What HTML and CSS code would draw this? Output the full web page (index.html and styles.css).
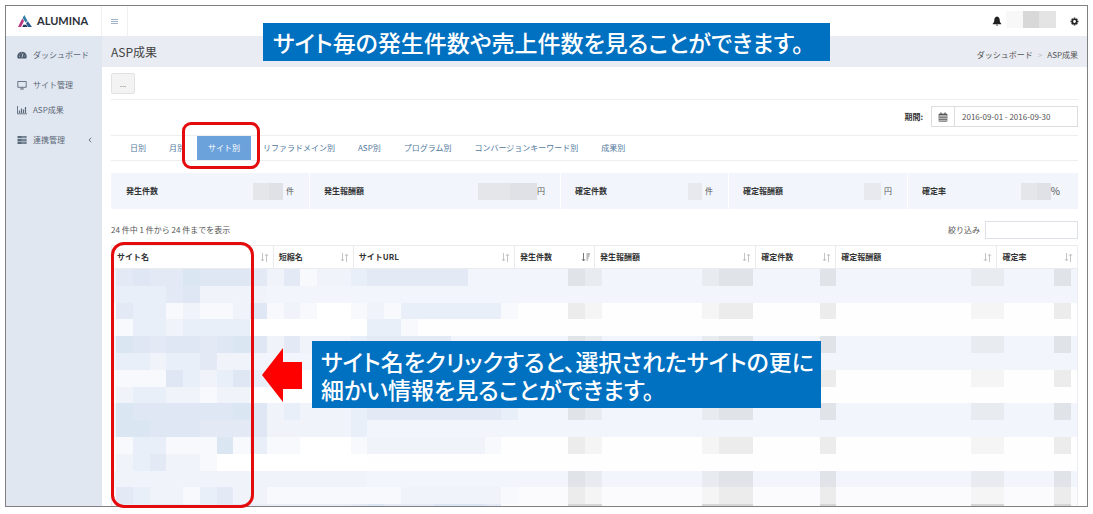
FILE: index.html
```html
<!DOCTYPE html>
<html lang="ja">
<head>
<meta charset="utf-8">
<title>ASP成果 - ALUMINA</title>
<link rel="stylesheet" href="styles.css">
</head>
<body>
<div class="frame">
  <header class="topbar">
    <a class="brand" href="#">
      <svg class="brand-mark" viewBox="0 0 14 12" aria-hidden="true">
        <path d="M0 12 4.300 3.500 6 6 3 12z" fill="#b8357f"/>
        <path d="M4.600 3 6.300 0 9.500 5.800 7.600 7.600z" fill="#2f7fa8"/>
        <path d="M8 8.200 9.900 6.300 14 12H10z" fill="#2c5e94"/>
        <path d="M4.300 12 5.400 9.800H8.300L9.400 12z" fill="#27355c"/>
      </svg>
      <span>ALUMINA</span>
    </a>
    <button class="toggle" type="button" aria-label="メニュー"><i></i><i></i><i></i></button>
    <div class="user">
      <svg class="bell" viewBox="0 0 10 10" aria-hidden="true"><path d="M5 .5C3 .8 2.400 2.300 2.300 4 2.200 6 1.600 6.700.800 7.600V8.200H9.200V7.600C8.400 6.700 7.800 6 7.700 4 7.600 2.300 7 .8 5 .5zM4 8.700H6Q5.800 9.800 5 9.800T4 8.700z"/></svg>
      <span class="name"><i></i><i></i><i></i></span>
      <svg class="gear" viewBox="0 0 10 10" aria-hidden="true"><circle cx="5" cy="5" r="2.500" fill="none" stroke="#222" stroke-width="1.900"/><path d="M5 .6V2M5 8V9.400M.6 5H2M8 5H9.400M1.900 1.900 2.900 2.900M7.100 7.100 8.100 8.100M1.900 8.100 2.900 7.100M7.100 2.900 8.100 1.900" stroke="#222" stroke-width="1.700"/></svg>
    </div>
  </header>
  <div class="body">
    <nav class="sidebar">
      <a href="#"><svg viewBox="0 0 10 10"><path d="M.8 8.500A4.700 4.700 0 1 1 9.200 8.500z" fill="#4a5a6c"/><path d="M5 7.500 6 3.500M2 6.200H3M2.700 3.800 3.300 4.300M7.500 6H8.300M4.500 2.500V3.200" stroke="#e1e7f0" stroke-width=".8"/></svg>ダッシュボード</a>
      <a class="second" href="#"><svg viewBox="0 0 10 10"><path d="M.8 1.500H9.200V7.300H.8zM3 9H7M5 7.300V9" fill="none" stroke="#5b6b7c" stroke-width=".9"/></svg>サイト管理</a>
      <a href="#"><svg viewBox="0 0 10 10"><path d="M.5 1V8.800H10" fill="none" stroke="#5b6b7c" stroke-width=".9"/><path d="M2.500 5.500V8M4.500 3.500V8M6.500 4.500V8M8.500 2V8" stroke="#5b6b7c" stroke-width="1.200"/></svg>ASP成果</a>
      <a class="last" href="#"><svg viewBox="0 0 10 10"><path d="M.5 1H9.500V3.300H.5zM.5 3.900H9.500V6.200H.5zM.5 6.800H9.500V9.100H.5z" fill="#5b6b7c"/><path d="M4.500 2.100H8.500M4.500 5H8.500M4.500 7.900H8.500" stroke="#b9c3cf" stroke-width=".7"/></svg>連携管理
        <svg class="chev" viewBox="0 0 4 6"><path d="M3.200.7 1 3 3.200 5.300" fill="none" stroke="#5b6b7c" stroke-width=".9"/></svg></a>
    </nav>
    <main class="main">
      <div class="heading">
        <h1>ASP成果</h1>
        <div class="crumbs"><a href="#">ダッシュボード</a><span class="sep">&gt;</span><span>ASP成果</span></div>
      </div>
      <div class="content">
        <div class="actions"><button class="more" type="button">...</button></div>
        <div class="period">
          <label for="range">期間:</label>
          <div class="range">
            <span class="cal"><svg viewBox="0 0 10 10"><path d="M1 2H9V9.300H1zM1 3.900H9M1 5.700H9M1 7.500H9M3 4V9.300M5 4V9.300M7 4V9.300" fill="none" stroke="#555" stroke-width=".7"/><path d="M1 2.500H9M3 .5V2.500M7 .5V2.500" stroke="#555" stroke-width="1.200"/></svg></span>
            <input id="range" type="text" value="2016-09-01 - 2016-09-30">
          </div>
        </div>
        <nav class="tabs">
          <a href="#">日別</a><a href="#">月別</a><a class="on" href="#">サイト別</a><a href="#">リファラドメイン別</a><a href="#">ASP別</a><a href="#">プログラム別</a><a href="#">コンバージョンキーワード別</a><a href="#">成果別</a>
        </nav>
        <div class="stats">
          <div class="stat"><b>発生件数</b><span><i class="mask m30"></i>件</span></div>
          <div class="stat"><b>発生報酬額</b><span class="tight"><i class="mask m59"></i>円</span></div>
          <div class="stat"><b>確定件数</b><span><i class="mask m14"></i>件</span></div>
          <div class="stat"><b>確定報酬額</b><span><i class="mask m17"></i>円</span></div>
          <div class="stat"><b>確定率</b><span class="tight pct"><i class="mask m30"></i>%</span></div>
        </div>
        <div class="tools">
          <span>24 件中 1 件から 24 件までを表示</span>
          <label for="filter">絞り込み</label><input id="filter" type="search">
        </div>
        <div class="grid">
          <table>
            <colgroup><col class="wide"><col><col class="wide"><col><col class="wide"><col><col class="wide"><col></colgroup>
            <thead><tr>
              <th>サイト名<span class="sort"></span></th><th>短縮名<span class="sort"></span></th><th>サイトURL<span class="sort"></span></th><th>発生件数<span class="sort active"></span></th><th>発生報酬額<span class="sort"></span></th><th>確定件数<span class="sort"></span></th><th>確定報酬額<span class="sort"></span></th><th>確定率<span class="sort"></span></th>
            </tr></thead>
          </table>
          <svg class="mosaic" viewBox="0 0 967 238" preserveAspectRatio="none" aria-hidden="true"></svg>
        </div>
      </div>
    </main>
  </div>
</div>
<div class="ring ring-tab"></div>
<div class="ring ring-column"></div>
<div class="note note-top">サイト毎の発生件数や売上件数を見ることができます。</div>
<svg class="arrow" viewBox="0 0 40 54" aria-hidden="true"><path d="M0 27 21 0V14H40V41H21V54z" fill="#fe0000"/></svg>
<div class="note note-mid">サイト名をクリックすると、選択されたサイトの更に<br>細かい情報を見ることができます。</div>
<script src="script.js"></script>
</body>
</html>
```
FILE: styles.css
```css
* { box-sizing: border-box; }
body {
  position: relative;
  margin: 0;
  padding: 5px 5px 7px;
  min-height: 100vh;
  background: #fff;
  color: #555;
  font: 8px/12px "Noto Sans CJK JP", "Noto Sans", sans-serif;
}
a { color: inherit; text-decoration: none; }
button, input { font: inherit; color: inherit; border-radius: 0; }
.frame {
  display: flex;
  flex-direction: column;
  height: calc(100vh - 12px);
  border: 1px solid #808080;
  overflow: hidden;
}

.topbar { display: flex; flex: 0 0 30px; background: #fff; }
.brand {
  display: flex;
  align-items: center;
  gap: 5px;
  flex: 0 0 96px;
  padding-left: 12px;
  border-right: 1px solid #eef0f3;
  color: #2b2f38;
  font: 700 11px/14px Lato, sans-serif;
}
.brand-mark { width: 14px; height: 12px; }
.toggle {
  display: flex;
  flex-direction: column;
  align-items: center;
  justify-content: center;
  gap: 1px;
  width: 26px;
  padding: 0;
  border: 0;
  border-right: 1px solid #eef0f3;
  background: none;
}
.toggle i { width: 7px; height: 1px; background: #9fb1c6; }
.user { display: flex; align-items: center; margin-left: auto; padding-right: 8px; }
.bell { width: 10px; height: 10px; fill: #222; }
.name { display: flex; width: 50px; height: 17px; margin: 0 14px 4px 4px; }
.name i { flex: 1; background: #f8f8f8; }
.name i:nth-child(2) { background: #d8d8d9; }
.name i:nth-child(3) { background: #e4e4e5; }
.gear { width: 9px; height: 9px; }

.body { display: flex; flex: 1; min-height: 0; }
.sidebar { flex: 0 0 96px; padding-top: 6px; background: #e1e7f0; color: #5b6878; }
.sidebar a { display: flex; align-items: center; gap: 6px; height: 25px; padding: 0 10px 0 11px; white-space: nowrap; }
.sidebar a svg { flex: none; width: 10px; height: 10px; }
.sidebar .second { margin-top: 5px; }
.sidebar .last { margin-top: 5px; }
.sidebar a .chev { width: 4px; height: 6px; margin-left: auto; }

.main { flex: 1; min-width: 0; }
.heading {
  display: flex;
  align-items: center;
  justify-content: space-between;
  height: 31px;
  padding: 0 9px;
  background: #e9ecf2;
}
.heading h1 { margin: 0; color: #444; font-size: 12px; font-weight: 400; line-height: 18px; }
.crumbs { display: flex; gap: 5px; padding-top: 6px; }
.crumbs .sep { color: #bbb; }
.content { padding: 6px 9px 0; }
.actions { height: 27px; border-bottom: 1px solid #eee; }
.more { display: block; width: 24px; height: 21px; padding: 0; border: 1px solid #e2e2e2; border-radius: 2px; background: #f3f3f3; color: #888; }
.period { display: flex; align-items: center; justify-content: flex-end; gap: 8px; margin-top: 6px; }
.period label { color: #333; font-weight: 700; }
.range { display: flex; width: 147px; height: 21px; border: 1px solid #ddd; }
.cal { display: flex; align-items: center; justify-content: center; width: 23px; border-right: 1px solid #ddd; }
.cal svg { width: 10px; height: 10px; }
.range input { flex: 1; min-width: 0; padding: 0 7px; border: 0; background: #fff; font-size: 8px; }

.tabs {
  display: flex;
  gap: 1px;
  height: 26px;
  margin-top: 8px;
  padding-left: 8px;
  border-top: 1px solid #eee;
  border-bottom: 1px solid #eee;
  color: #50789d;
  line-height: 24px;
  white-space: nowrap;
}
.tabs a { padding: 0 11px; }
.tabs .on { background: #6ca2dc; color: #fff; }

.stats { display: grid; grid-template-columns: 198fr 251fr 168fr 179fr 171fr; height: 36px; margin-top: 12px; background: #f2f5fb; }
.stat { display: flex; align-items: center; justify-content: space-between; padding: 0 15px; }
.stat + .stat { padding-left: 14px; border-left: 1px solid #fff; }
.stat b { color: #333; }
.stat span { display: flex; align-items: center; gap: 3px; }
.stat .tight { gap: 0; }
.stat .pct { padding-right: 3px; font-size: 10px; }
.mask { height: 17px; background: linear-gradient(90deg, #e5e6ea 55%, #e0e1e6 55%); }
.m14 { width: 14px; background: #e8e9ee; }
.m17 { width: 17px; background: #e8e9ee; }
.m30 { width: 30px; }
.m59 { width: 59px; }

.tools { display: flex; align-items: center; height: 18px; margin-top: 12px; }
.tools label { margin-left: auto; }
.tools input { width: 93px; height: 18px; margin-left: 5px; border: 1px solid #dde1e6; background: #fff; }
.grid { position: relative; margin-top: 6px; border-left: 1px solid #eaedf2; border-right: 1px solid #eaedf2; }
table { width: 100%; table-layout: fixed; border-collapse: collapse; }
.wide { width: 16.700%; }
th {
  position: relative;
  height: 23px;
  padding: 0 5px;
  border: 1px solid #e9ebee;
  border-width: 1px 1px 1px 0;
  color: #333;
  text-align: left;
  white-space: nowrap;
}
th:last-child { border-right: 0; }
.sort { position: absolute; top: 7px; right: 4px; width: 9px; height: 9px; }
.sort svg { display: block; width: 9px; height: 9px; }
.mosaic { display: block; width: 100%; height: 238px; }

.ring { position: absolute; border: 3px solid #e30b0b; }
.ring-tab { left: 182px; top: 122px; width: 78px; height: 47px; border-radius: 9px; }
.ring-column { left: 111px; top: 242px; width: 143px; height: 266px; border-radius: 13px; }
.note {
  position: absolute;
  background: #0070c0;
  color: #fff;
  font-size: 23px;
  font-weight: 500;
  line-height: 28px;
  font-feature-settings: "palt";
  white-space: nowrap;
}
.note-top { left: 263px; top: 23px; width: 567px; padding: 5px 10px; }
.note-mid { left: 312px; top: 341px; width: 509px; padding: 6px 9px 5px; }
.arrow { position: absolute; left: 262px; top: 348px; width: 40px; height: 54px; }
```
FILE: script.js
```js
const colors = {
  a: '#dbe6f3', b: '#e0e7f4', c: '#e4eaf5', d: '#e9eff8', e: '#f0f3f9', f: '#f7f9fd', g: '#ffffff',
  h: '#e0e3e8', i: '#e8ebef', j: '#ececed', k: '#f5f5f5'
};
const left = [
  'cbccabbbcecfeedcccccc',
  'dddcbeeee',
  'cddfeffebfefggfefddddddf',
  'fddeddddgggggggddf',
  'abcbbcbabeceeedccccc',
  'ddeddcee',
  'fffbdedbdefggeedddddd',
  'eddeefee',
  'abbbbbbabedeeedccccccccd',
  'aabbbcccbeeeeed',
  'fddfffafdffgggfeeeeeeef',
  'edceefggggggggg',
  'eeeeeeeeeeeeeee',
  'cdeefdceeffffffffeeeeeef',
  'ddccddccddddddcacccaaac'
];
const x = i => 4 + i * 16.79;
const y = i => i * 16.8;
const rect = (px, py, w, h, fill) => `<rect x="${px}" y="${py}" width="${w}" height="${h}" fill="${fill}"/>`;
let out = '';
for (let r = 0; r < 15; r++) {
  const striped = r % 4 < 2 && r < 13;
  out += rect(0, y(r), 967, 17, striped ? '#f2f5fb' : r > 12 ? '#fbfbfd' : '#fefefe');
  [...left[r]].forEach((c, i) => { out += rect(x(i), y(r), 16.79, 16.8, colors[c]); });
  if (r % 2 === 0 || r === 13) {
    const dark = striped ? 'h' : 'j';
    const light = striped ? 'i' : 'k';
    [[27, dark], [28, light], [35, light], [36, dark], [37, dark], [42, dark], [51, light], [52, light], [56, dark]]
      .forEach(([i, c]) => { out += rect(x(i), y(r), 16.79, 16.8, r === 14 ? '#d5d6d8' : colors[c]); });
  }
}
const mosaic = document.querySelector('.mosaic');
mosaic.setAttribute('shape-rendering', 'crispEdges');
mosaic.innerHTML = out;

document.querySelectorAll('.sort').forEach(el => {
  const active = el.classList.contains('active');
  const second = active
    ? 'M5.500 1H9M5.500 3H8.400M5.500 5H7.600M5.500 7H6.800'
    : 'M6.500 9V1M5 2.800 6.500 1 8 2.800';
  el.innerHTML = `<svg viewBox="0 0 9 9"><path d="M2.500 0V8M1 6.200 2.500 8 4 6.200${second}" fill="none" stroke="${active ? '#777' : '#c4c4c4'}"/></svg>`;
});
```
